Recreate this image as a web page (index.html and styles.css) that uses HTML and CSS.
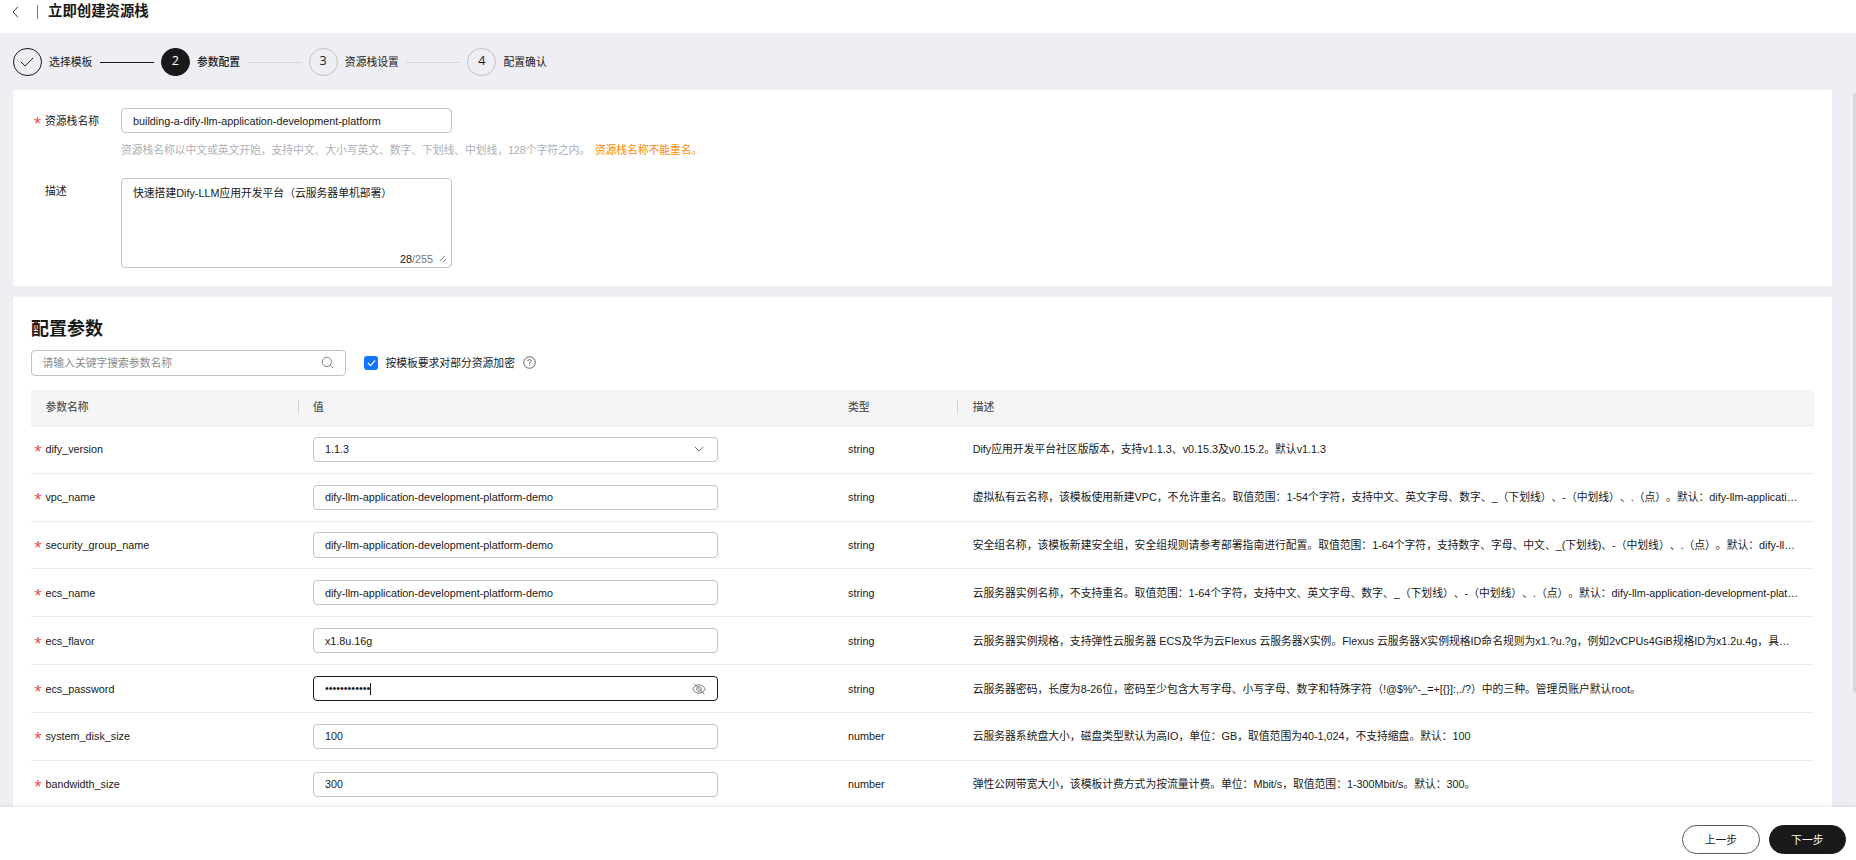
FILE: index.html
```
<!DOCTYPE html>
<html lang="zh-CN">
<head>
<meta charset="UTF-8" />
<meta name="viewport" content="width=device-width, initial-scale=1" />
<title>立即创建资源栈</title>
<link rel="stylesheet" href="styles.css">
</head>
<body>
<header class="header">
    <svg class="back" viewBox="0 0 7 12"><path d="M6 .7 1 6l5 5.3" /></svg>
    <span class="header-line"></span>
    <h1>立即创建资源栈</h1>
</header>

<nav class="steps">
    <span class="step-num done"><svg viewBox="0 0 14 10"><path d="M.8 4.8 5.2 9 13.2.8" /></svg></span>
    <span class="step-label">选择模板</span>
    <span class="step-line dark"></span>
    <span class="step-num active">2</span>
    <span class="step-label current">参数配置</span>
    <span class="step-line"></span>
    <span class="step-num">3</span>
    <span class="step-label">资源栈设置</span>
    <span class="step-line"></span>
    <span class="step-num">4</span>
    <span class="step-label">配置确认</span>
</nav>

<main class="content">
    <section class="panel basic">
        <div class="form-row">
            <label class="form-label required">资源栈名称</label>
            <div>
                <div class="field name-field">building-a-dify-llm-application-development-platform</div>
                <p class="hint">资源栈名称以中文或英文开始，支持中文、大小写英文、数字、下划线、中划线，128个字符之内。 <span class="warn">资源栈名称不能重名。</span></p>
            </div>
        </div>
        <div class="form-row">
            <label class="form-label">描述</label>
            <div class="textarea">
                <span>快速搭建Dify-LLM应用开发平台（云服务器单机部署）</span>
                <div class="counter"><span>28<i>/255</i></span><svg viewBox="0 0 8 8"><path d="M.8 6 6 .8M4 7 7 4" /></svg></div>
            </div>
        </div>
    </section>

    <section class="panel params">
        <h2>配置参数</h2>
        <div class="toolbar">
            <div class="field search">
                <span>请输入关键字搜索参数名称</span>
                <svg viewBox="0 0 14 14"><circle cx="6.3" cy="6.3" r="5" /><path d="m10 10 3 3" /></svg>
            </div>
            <span class="checkbox"><svg viewBox="0 0 10 8"><path d="m1 4 2.9 2.9L9 1" /></svg></span>
            <span class="check-label">按模板要求对部分资源加密</span>
            <svg class="help" viewBox="0 0 14 14"><circle cx="7" cy="7" r="6.2" /><path d="M5.2 5.6c0-1.1.8-1.8 1.8-1.8s1.8.7 1.8 1.7c0 1.3-1.8 1.3-1.8 2.8M7 9.5v1" /></svg>
        </div>

        <div class="table">
            <div class="row head">
                <div class="cell">参数名称</div>
                <div class="cell split">值</div>
                <div class="cell">类型</div>
                <div class="cell split">描述</div>
            </div>
            <div class="row">
                <div class="cell required">dify_version</div>
                <div class="cell"><div class="field select"><span>1.1.3</span><svg viewBox="0 0 10 6"><path d="m.8.8 4.2 4.2L9.2.8" /></svg></div></div>
                <div class="cell">string</div>
                <div class="cell">Dify应用开发平台社区版版本，支持v1.1.3、v0.15.3及v0.15.2。默认v1.1.3</div>
            </div>
            <div class="row">
                <div class="cell required">vpc_name</div>
                <div class="cell"><div class="field">dify-llm-application-development-platform-demo</div></div>
                <div class="cell">string</div>
                <div class="cell">虚拟私有云名称，该模板使用新建VPC，不允许重名。取值范围：1-54个字符，支持中文、英文字母、数字、_（下划线）、-（中划线）、.（点）。默认：dify-llm-applicati…</div>
            </div>
            <div class="row">
                <div class="cell required">security_group_name</div>
                <div class="cell"><div class="field">dify-llm-application-development-platform-demo</div></div>
                <div class="cell">string</div>
                <div class="cell">安全组名称，该模板新建安全组，安全组规则请参考部署指南进行配置。取值范围：1-64个字符，支持数字、字母、中文、_(下划线)、-（中划线）、.（点）。默认：dify-ll…</div>
            </div>
            <div class="row">
                <div class="cell required">ecs_name</div>
                <div class="cell"><div class="field">dify-llm-application-development-platform-demo</div></div>
                <div class="cell">string</div>
                <div class="cell">云服务器实例名称，不支持重名。取值范围：1-64个字符，支持中文、英文字母、数字、_（下划线）、-（中划线）、.（点）。默认：dify-llm-application-development-plat…</div>
            </div>
            <div class="row">
                <div class="cell required">ecs_flavor</div>
                <div class="cell"><div class="field">x1.8u.16g</div></div>
                <div class="cell">string</div>
                <div class="cell">云服务器实例规格，支持弹性云服务器 ECS及华为云Flexus 云服务器X实例。Flexus 云服务器X实例规格ID命名规则为x1.?u.?g，例如2vCPUs4GiB规格ID为x1.2u.4g，具…</div>
            </div>
            <div class="row">
                <div class="cell required">ecs_password</div>
                <div class="cell"><div class="field focus"><span class="password">••••••••••••</span><svg viewBox="0 0 14 12"><path d="M.7 6C2 3.4 4.3 1.8 7 1.8S12 3.4 13.3 6C12 8.6 9.7 10.2 7 10.2S2 8.6.7 6zM2 .6l10.5 10.8" /><circle cx="7" cy="6" r="2.3" /></svg></div></div>
                <div class="cell">string</div>
                <div class="cell">云服务器密码，长度为8-26位，密码至少包含大写字母、小写字母、数字和特殊字符（!@$%^-_=+[{}]:,./?）中的三种。管理员账户默认root。</div>
            </div>
            <div class="row">
                <div class="cell required">system_disk_size</div>
                <div class="cell"><div class="field">100</div></div>
                <div class="cell">number</div>
                <div class="cell">云服务器系统盘大小，磁盘类型默认为高IO，单位：GB，取值范围为40-1,024，不支持缩盘。默认：100</div>
            </div>
            <div class="row">
                <div class="cell required">bandwidth_size</div>
                <div class="cell"><div class="field">300</div></div>
                <div class="cell">number</div>
                <div class="cell">弹性公网带宽大小，该模板计费方式为按流量计费。单位：Mbit/s，取值范围：1-300Mbit/s。默认：300。</div>
            </div>
        </div>
    </section>
    <span class="scrollbar"></span>
</main>

<footer class="footer">
    <button class="btn">上一步</button>
    <button class="btn primary">下一步</button>
</footer>
</body>
</html>
```
FILE: styles.css
```
* {
    box-sizing: border-box;
}
body {
    margin: 0;
    height: 860px;
    display: flex;
    flex-direction: column;
    overflow: hidden;
    background: #eeeff5;
    color: #191919;
    font-family: "Liberation Sans", "Noto Sans CJK SC", sans-serif;
    font-size: 10.8px;
    line-height: 16px;
    text-spacing-trim: space-all;
}
h1, h2, p {
    margin: 0;
}
svg {
    fill: none;
    stroke: #777;
    stroke-width: 1;
    flex: none;
}

/* cabecera */
.header {
    height: 33px;
    flex: none;
    display: flex;
    align-items: center;
    padding: 0 0 10px 12px;
    background: #fff;
}
.back {
    width: 7px;
    height: 12px;
    stroke: #333;
}
.header-line {
    width: 1px;
    height: 14px;
    margin: 0 10px 0 18px;
    background: #777;
}
h1 {
    padding-bottom: 2px;
    font-size: 14.4px;
}

.steps {
    height: 57px;
    flex: none;
    display: flex;
    align-items: center;
    gap: 7.3px;
    padding: 1px 0 0 13px;
}
.step-num {
    width: 28.8px;
    height: 28.8px;
    display: flex;
    align-items: center;
    justify-content: center;
    padding-bottom: 2px;
    border: 1px solid #c2c2c2;
    border-radius: 50%;
    font-family: "Open Sans", sans-serif;
    font-size: 12.6px;
}
.step-num.done {
    padding-bottom: 0;
    border-color: #191919;
}
.step-num svg {
    width: 14px;
    height: 10px;
    stroke: #191919;
}
.step-num.active {
    background: #191919;
    border-color: #191919;
    color: #fff;
}
.step-label.current {
    font-weight: 500;
}
.step-line {
    width: 54px;
    height: 1px;
    background: #d3d4d9;
}
.step-line.dark {
    background: #191919;
}

.content {
    position: relative;
    flex: 1;
    min-height: 0;
    overflow: hidden;
    padding: 0 24px 0 13px;
}
.panel {
    background: #fff;
}
.basic {
    height: 196px;
    margin-bottom: 11px;
    padding: 18px 32px;
}
.form-row {
    display: flex;
}
.form-label {
    width: 76px;
    padding-top: 5px;
}
.field {
    height: 25.2px;
    display: flex;
    align-items: center;
    justify-content: space-between;
    padding: 0 12px 0 11px;
    border: 1px solid #c2c2c2;
    border-radius: 4px;
    background: #fff;
}
.name-field {
    width: 331px;
}
.hint {
    margin: 9px 0 20px;
    color: #adb0b8;
    letter-spacing: -0.05px;
}
.warn {
    margin-left: 1.5px;
    color: #ff8800;
}
.textarea {
    width: 331px;
    height: 90px;
    display: flex;
    flex-direction: column;
    justify-content: space-between;
    padding: 6px 4px 0 11px;
    border: 1px solid #c2c2c2;
    border-radius: 4px;
}
.counter {
    display: flex;
    align-items: center;
    justify-content: flex-end;
    gap: 6px;
}
.counter i {
    color: #777;
    font-style: normal;
}
.counter svg {
    width: 8px;
    height: 8px;
}

/* asterisco rojo delante del nombre */
.required {
    position: relative;
}
.required::before {
    content: "*";
    position: absolute;
    margin: 3px 0 0 -11px;
    color: #f5484c;
    font-size: 18px;
}

.params {
    padding: 21px 18px 0;
}
h2 {
    font-size: 18px;
    line-height: 22px;
}
.toolbar {
    display: flex;
    align-items: center;
    margin: 10.4px 0 14.4px;
}
.search {
    width: 314.5px;
    margin-right: 18.5px;
    padding: 0 11px 0 10.5px;
    color: #8a8a8a;
}
.search svg {
    width: 13px;
    height: 13px;
}
.checkbox {
    width: 14.4px;
    height: 14.4px;
    display: flex;
    align-items: center;
    justify-content: center;
    margin-right: 7px;
    border-radius: 3px;
    background: #1476ff;
}
.checkbox svg {
    width: 9px;
    height: 8px;
    stroke: #fff;
    stroke-width: 1.3;
}
.help {
    width: 13px;
    height: 13px;
    margin-left: 8px;
    stroke: #555;
}

.row {
    height: 47.83px;
    display: grid;
    grid-template-columns: 267.5px 535.1px 124.7px 1fr;
    align-items: center;
    border-bottom: 1px solid #ebebeb;
}
.row.head {
    height: 36px;
    background: #f5f5f5;
    color: #575757;
    font-weight: 500;
}
.cell {
    padding: 0 14.4px;
    white-space: nowrap;
}
.cell .field {
    width: 405px;
}
.split {
    background: linear-gradient(#d3d4d9, #d3d4d9) left center / 1px 14px no-repeat;
    margin-left: -1px;
    padding-left: 15.4px;
}
.select svg {
    width: 10px;
    height: 6px;
}
.cell .select {
    padding-right: 13px;
}
.field.focus {
    border-color: #191919;
    padding-right: 11px;
}
.focus svg {
    width: 14px;
    height: 12px;
}
.password {
    border-right: 1px solid #191919;
    height: 12px;
    line-height: 11px;
}

.scrollbar {
    position: absolute;
    top: 3px;
    right: 0;
    width: 3px;
    height: 600px;
    border-radius: 3px 0 0 3px;
    background: #d8d8d8;
}

.footer {
    position: relative;
    height: 53.3px;
    flex: none;
    display: flex;
    align-items: center;
    justify-content: flex-end;
    gap: 9px;
    padding: 13px 10px 0 0;
    background: #fff;
    box-shadow: 0 -1px 4px rgba(0, 0, 0, 0.1);
}
.btn {
    width: 77.4px;
    height: 28.8px;
    padding: 0;
    border: 1px solid #595959;
    border-radius: 15px;
    background: #fff;
    color: #191919;
    font: inherit;
}
.btn.primary {
    background: #191919;
    border-color: #191919;
    color: #fff;
}
```
